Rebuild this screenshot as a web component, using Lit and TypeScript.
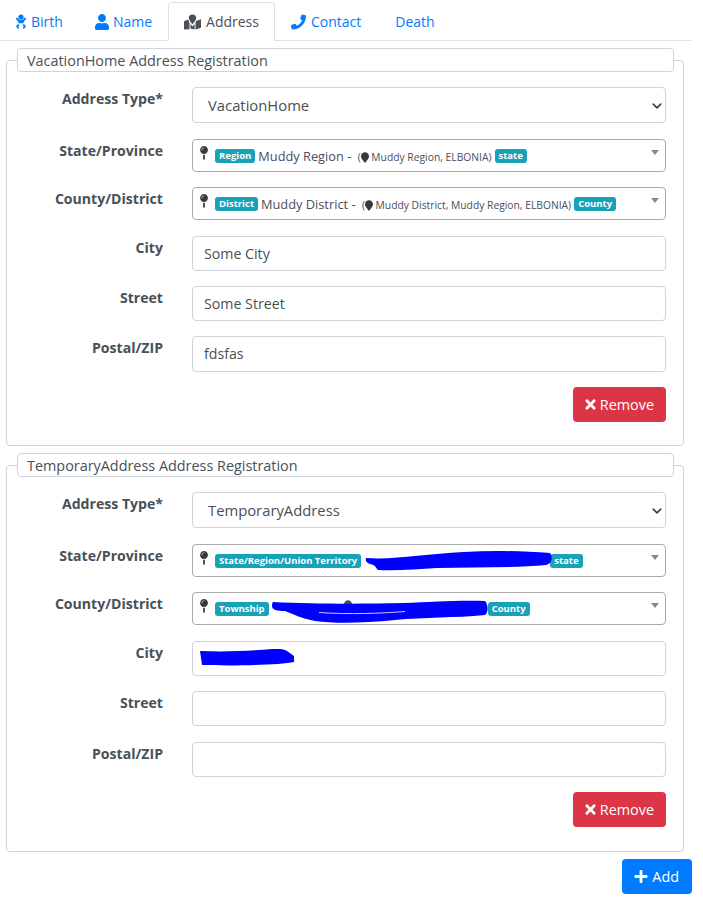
import { LitElement, css, html } from 'lit';
import { customElement } from 'lit/decorators.js';

const PIN =
  'M112 316.94v156.69l22.02 33.02c4.75 7.12 15.22 7.12 19.97 0L176 473.63V316.94c-10.39 1.92-21.06 3.06-32 3.06s-21.61-1.14-32-3.06zM144 0C64.47 0 0 64.47 0 144s64.47 144 144 144 144-64.47 144-144S223.53 0 144 0zm0 76c-37.5 0-68 30.5-68 68 0 6.62-5.38 12-12 12s-12-5.38-12-12c0-50.73 41.28-92 92-92 6.62 0 12 5.38 12 12s-5.38 12-12 12z';
const MARKER =
  'M172.268 501.67C26.97 291.031 0 269.413 0 192 0 85.961 85.961 0 192 0s192 85.961 192 192c0 77.413-26.97 99.031-172.268 309.67-9.535 13.774-29.93 13.773-39.464 0z';
const TIMES =
  'M242.72 256l100.07-100.07c12.28-12.28 12.28-32.19 0-44.48l-22.24-22.24c-12.28-12.28-32.19-12.28-44.48 0L176 189.28 75.93 89.21c-12.28-12.28-32.19-12.28-44.48 0L9.21 111.45c-12.28 12.28-12.28 32.19 0 44.48L109.28 256 9.21 356.07c-12.28 12.28-12.28 32.19 0 44.48l22.24 22.24c12.28 12.28 32.2 12.28 44.48 0L176 322.72l100.07 100.07c12.28 12.28 32.2 12.28 44.48 0l22.24-22.24c12.28-12.28 12.28-32.19 0-44.48L242.72 256z';
const PLUS =
  'M416 208H272V64c0-17.67-14.33-32-32-32h-32c-17.67 0-32 14.33-32 32v144H32c-17.67 0-32 14.33-32 32v32c0 17.67 14.33 32 32 32h144v144c0 17.67 14.33 32 32 32h32c17.67 0 32-14.33 32-32V304h144c17.67 0 32-14.33 32-32v-32c0-17.67-14.33-32-32-32z';
const USER =
  'M224 256c70.7 0 128-57.3 128-128S294.7 0 224 0 96 57.3 96 128s57.3 128 128 128zm89.6 32h-16.7c-22.2 10.2-46.9 16-72.9 16s-50.6-5.8-72.9-16h-16.7C60.2 288 0 348.2 0 422.4V464c0 26.5 21.5 48 48 48h352c26.5 0 48-21.5 48-48v-41.6c0-74.2-60.2-134.4-134.4-134.4z';
const PHONE =
  'M493.4 24.6l-104-24c-11.3-2.6-22.9 3.3-27.5 13.9l-48 112c-4.2 9.8-1.4 21.3 6.9 28l60.6 49.6c-36 76.7-98.9 140.5-177.2 177.2l-49.6-60.6c-6.8-8.3-18.2-11.1-28-6.9l-112 48C3.9 366.5-2 378.1.6 389.4l24 104C27.1 504.2 36.7 512 48 512c256.1 0 464-207.5 464-464 0-11.2-7.7-20.9-18.6-23.4z';

const icon = (d: string, vb: string, cls: string) =>
  html`<svg class=${cls} viewBox=${vb}><path fill="currentColor" d=${d}></path></svg>`;

const babyIcon = html`<svg class="tab-ico baby" viewBox="0 0 12 16">
  <g fill="currentColor">
    <circle cx="6" cy="3" r="2.6"></circle>
    <path d="M.6 4.600 2 3.600 4.600 6h2.800L10 3.600l1.400 1L8.600 8v1.200H3.400V8z"></path>
    <path d="M3.200 10l1.300 1.200-1.200 1.400 1 1.300-1.300 1-1.600-2.100c-.3-.4-.3-.9 0-1.200z"></path>
    <path d="M8.800 10l-1.300 1.200 1.200 1.400-1 1.300 1.300 1 1.600-2.100c.3-.4.3-.9 0-1.200z"></path>
  </g>
</svg>`;

const mapIcon = html`<svg class="tab-ico map" viewBox="0 0 18 16">
  <g fill="currentColor">
    <path d="M9 0a3.900 3.900 0 0 0-3.900 3.900C5.100 5.700 7.600 8.700 9 10.300c1.400-1.600 3.900-4.600 3.900-6.400A3.900 3.900 0 0 0 9 0z"></path>
    <path d="M0 7.200 4.300 5.400c.3 1 .9 2 1.500 3V15.800L.6 16c-.3 0-.6-.2-.6-.5z"></path>
    <path d="M6.800 10c.8 1 1.400 1.700 2.200 2.700.8-1 1.400-1.700 2.200-2.700v6L6.800 15z"></path>
    <path d="M12.200 8.400 13 7l5-1.800V14.200L12.200 16z"></path>
  </g>
</svg>`;

interface Tab {
  label: string;
  ico?: unknown;
  active?: boolean;
}

const TABS: Tab[] = [
  { label: 'Birth', ico: babyIcon },
  { label: 'Name', ico: icon(USER, '0 0 448 512', 'tab-ico') },
  { label: 'Address', ico: mapIcon, active: true },
  { label: 'Contact', ico: icon(PHONE, '0 0 512 512', 'tab-ico phone') },
  { label: 'Death' },
];

@customElement('app-root')
export class AppRoot extends LitElement {
  picked(first: unknown, tail: string, big: unknown, overlay?: unknown) {
    return html`<div class="sel2">
      ${icon(PIN, '0 0 288 512', 'pin')}
      <span class="chip">${first}</span>
      <span class="main">${big}</span>
      <span class="chip">${tail}</span>
      <span class="caret"></span>
      ${overlay ?? ''}
    </div>`;
  }

  minor(name: string, path: string) {
    return html`${name} - <span class="sub">(${icon(MARKER, '0 0 384 512', 'marker')} ${path})</span>`;
  }

  fieldset(title: string, type: string, state: unknown, county: unknown, city: unknown, street: string, zip: string, cls: string) {
    return html`<fieldset class=${cls}>
      <legend>${title} Address Registration</legend>
      <div class="row first">
        <label>Address Type*</label>
        <div class="select">${type}
          <svg class="chev" viewBox="0 0 16 16"><path d="M2 5l6 6 6-6" fill="none" stroke="#343a40" stroke-width="2.4" stroke-linecap="round" stroke-linejoin="round"></path></svg>
        </div>
      </div>
      <div class="row wide"><label>State/Province</label>${state}</div>
      <div class="row"><label>County/District</label>${county}</div>
      <div class="row wide"><label>City</label>${city}</div>
      <div class="row"><label>Street</label><div class="input">${street}</div></div>
      <div class="row postal"><label>Postal/ZIP</label><div class="input">${zip}</div></div>
      <div class="actions">
        <button class="btn red">${icon(TIMES, '0 0 352 512', 'btn-ico')}Remove</button>
      </div>
    </fieldset>`;
  }

  render() {
    const stateScribble = html`<svg class="scrawl state" viewBox="0 0 190 22">
      <path d="M1 9C30 11 60 5 100 3c30-2 60-1 87 1 3 4 2 11-4 12-30 3-70 2-110 3-20 1-40 3-60 2-3-3-2-5-8-6C2 14 0 12 1 9z" fill="#0000ff"></path>
    </svg>`;
    const countyScribble = html`<svg class="peek" viewBox="0 0 384 512"><path fill="#495057" d=${MARKER}></path></svg>
      <svg class="scrawl county" viewBox="0 0 218 28">
        <path d="M2 4c40 2 90 2 130 1 30-1 55-3 82-2 3 3 4 11 0 14-30 3-60 2-90 5-30 3-60 4-80 1-12-2-22-7-30-10-8 0-13-1-13-5C1 7 1 5 2 4z" fill="#0000ff"></path>
        <path d="M48 14.500c30 2 60 1 86-1" stroke="#c8c8ff" stroke-width="1" fill="none"></path>
      </svg>`;

    return html`
      <nav class="tabs">
        ${TABS.map(
          t => html`<a class=${t.active ? 'tab active' : 'tab'}>${t.ico ?? ''}<span>${t.label}</span></a>`
        )}
      </nav>
      ${this.fieldset(
        'VacationHome',
        'VacationHome',
        this.picked('Region', 'state', this.minor('Muddy Region', 'Muddy Region, ELBONIA')),
        this.picked('District', 'County', this.minor('Muddy District', 'Muddy District, Muddy Region, ELBONIA')),
        html`<div class="input">Some City</div>`,
        'Some Street',
        'fdsfas',
        'one'
      )}
      ${this.fieldset(
        'TemporaryAddress',
        'TemporaryAddress',
        this.picked('State/Region/Union Territory', 'state', html`<span class="gap" style="width:183px"></span>`, stateScribble),
        this.picked('Township', 'County', html`<span class="gap" style="width:213px"></span>`, countyScribble),
        html`<div class="input">
          <svg class="scrawl city" viewBox="0 0 94 17">
            <path d="M0 2c25 1 50 0 72-2 6-.5 12 0 15 2l7 5v6c-14 3-60 4-92 3z" fill="#0000ff"></path>
          </svg>
        </div>`,
        '',
        '',
        'two'
      )}
      <div class="footer">
        <button class="btn blue">${icon(PLUS, '0 0 448 512', 'btn-ico')}Add</button>
      </div>
    `;
  }

  static styles = css`
    :host {
      display: block;
      width: 703px;
      height: 903px;
      box-sizing: border-box;
      padding: 2px 11px 0 0;
      background: #fff;
      color: #495057;
      font-family: 'Open Sans', 'Noto Sans', sans-serif;
      font-size: 14.2px;
      overflow: hidden;
    }

    .tabs {
      display: flex;
      height: 38px;
      border-bottom: 1px solid #dee2e6;
    }

    .tab {
      box-sizing: border-box;
      height: 39px;
      display: flex;
      align-items: center;
      gap: 4px;
      padding: 0 15px;
      font-size: 14px;
      color: #007bff;
      border: 1px solid transparent;
      border-radius: 4px 4px 0 0;
      white-space: nowrap;
    }

    .tab:first-child {
      margin-left: -1px;
    }

    .tab:last-child {
      margin-left: 2px;
    }

    .tab.active {
      color: #495057;
      background: #fff;
      border-color: #dee2e6 #dee2e6 #fff;
    }

    .tab-ico {
      width: 14px;
      height: 16px;
    }

    .tab-ico.baby {
      width: 12px;
    }

    .tab-ico.map {
      width: 17px;
      margin-right: 1px;
    }

    .tab-ico.phone {
      width: 15px;
      margin-right: 1px;
    }

    fieldset {
      box-sizing: border-box;
      width: 678px;
      margin: 7px 0 0 6px;
      padding: 0 7px 0 10px;
      border: 1px solid #ced4da;
      border-radius: 4px;
    }

    fieldset.one {
      height: 398px;
    }

    fieldset.two {
      height: 399px;
    }

    legend {
      box-sizing: border-box;
      width: 657px;
      height: 24px;
      padding: 0 9px;
      line-height: 23px;
      font-size: 14.4px;
      color: #495057;
      background: #fff;
      border: 1px solid #ced4da;
      border-radius: 4px;
    }

    .row {
      display: grid;
      grid-template-columns: 146px 474px;
      column-gap: 29px;
      margin-top: 15px;
    }

    .row.wide {
      margin-top: 16px;
    }

    .two .row.postal {
      margin-top: 16px;
    }

    .one .row.postal .input {
      height: 36px;
    }

    label {
      text-align: right;
      font-weight: 700;
      font-size: 14.1px;
      color: #495057;
      line-height: 20px;
      padding-top: 2px;
    }

    .select,
    .input {
      position: relative;
      box-sizing: border-box;
      background: #fff;
      border: 1px solid #ced4da;
      border-radius: 4px;
      color: #495057;
    }

    .select {
      height: 36px;
      padding-left: 15px;
      line-height: 35px;
      font-size: 14.8px;
    }

    .chev {
      position: absolute;
      right: 3px;
      top: 13px;
      width: 10px;
      height: 10px;
    }

    .input {
      height: 35px;
      padding-left: 11px;
      line-height: 34px;
    }

    .sel2 {
      position: relative;
      box-sizing: border-box;
      height: 33px;
      display: flex;
      align-items: center;
      gap: 3px;
      padding: 0 0 0 7px;
      border: 1px solid #aaa;
      border-radius: 4px;
      white-space: nowrap;
    }

    .pin {
      width: 8px;
      height: 14px;
      margin: -5px 4px 0 0;
      color: #343a40;
    }

    .chip {
      background: #17a2b8;
      color: #fff;
      font-size: 9.5px;
      font-weight: 700;
      line-height: 14px;
      padding: 0 4px;
      border-radius: 3px;
    }

    .main {
      font-size: 12.8px;
      color: #495057;
    }

    .sub {
      font-size: 10.3px;
      margin-left: 3px;
    }

    .marker {
      width: 8px;
      height: 11px;
      vertical-align: -2px;
      color: #343a40;
    }

    .gap {
      display: inline-block;
    }

    .caret {
      position: absolute;
      right: 6px;
      top: 10px;
      border: 4px solid transparent;
      border-top: 5px solid #888;
      border-bottom: 0;
    }

    .scrawl {
      position: absolute;
    }

    .scrawl.state {
      left: 172px;
      top: 4px;
      width: 188px;
      height: 22px;
    }

    .scrawl.county {
      left: 78px;
      top: 5px;
      width: 218px;
      height: 28px;
    }

    .scrawl.city {
      left: 7px;
      top: 7px;
      width: 94px;
      height: 17px;
    }

    .peek {
      position: absolute;
      left: 151px;
      top: 7px;
      width: 8px;
      height: 11px;
    }

    .actions {
      display: flex;
      justify-content: flex-end;
      margin: 15px 0 0;
      padding-right: 10px;
    }

    .btn {
      box-sizing: border-box;
      height: 35px;
      display: inline-flex;
      align-items: center;
      gap: 4px;
      padding: 0 12px;
      border: 0;
      border-radius: 4px;
      color: #fff;
      font: inherit;
      font-size: 14.4px;
    }

    .btn.red {
      background: #dc3545;
    }

    .btn.blue {
      background: #007bff;
      padding-right: 13px;
    }

    .btn-ico {
      width: 11px;
      height: 15px;
    }

    .btn.blue .btn-ico {
      width: 14px;
    }

    .footer {
      display: flex;
      justify-content: flex-end;
      margin-top: 7px;
    }
  `;
}
